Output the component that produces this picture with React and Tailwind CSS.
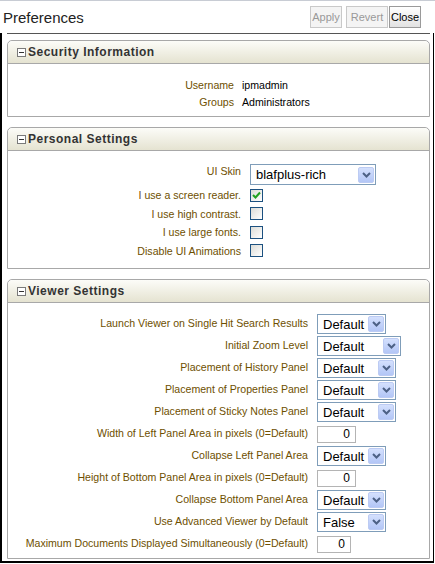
import React from "react";

const font = "font-['Liberation_Sans',Arial,sans-serif]";

function Chevron() {
  return (
    <svg width="9" height="6" viewBox="0 0 9 6">
      <path d="M1 1 L4.5 4.5 L8 1" fill="none" stroke="#4d6185" strokeWidth="2" />
    </svg>
  );
}

function Select({ value, w, h = "h-[20px]" }) {
  return (
    <div className={`flex items-center ${w} ${h} border border-[#7f9db9] bg-white`}>
      <span className="flex-1 pl-[5px] text-[13px] text-black leading-none">{value}</span>
      <span className="w-[16px] h-[16px] mr-[1px] flex items-center justify-center rounded-[2px] bg-gradient-to-b from-[#d4e0fd] to-[#b3c6f6] border border-[#bccbf3]">
        <Chevron />
      </span>
    </div>
  );
}

function TextInput({ value, w }) {
  return (
    <div className={`${w} h-[17px] border border-[#b4b4b4] bg-white flex items-center justify-end pr-[5px] text-[12px] text-black`}>
      {value}
    </div>
  );
}

function Checkbox({ checked }) {
  return (
    <div className="w-[13px] h-[13px] border border-[#1c5180] bg-gradient-to-br from-[#dcdcd7] to-white flex items-center justify-center">
      {checked && (
        <svg width="9" height="9" viewBox="0 0 9 9">
          <path d="M1 4 L3.5 6.5 L8 1.5" fill="none" stroke="#21a121" strokeWidth="2" />
        </svg>
      )}
    </div>
  );
}

function Panel({ title, className = "", children }) {
  return (
    <div className={`ml-[5px] mr-[3px] border border-[#a8a8a8] rounded-t-[5px] ${className}`}>
      <div className="h-[23px] flex items-center pl-[9px] border-b border-[#a8a8a8] rounded-t-[5px] bg-gradient-to-b from-[#fcfcf8] to-[#e5e3d1]">
        <span className="w-[9px] h-[9px] border border-[#7a7a7a] flex items-center justify-center mr-[2px] bg-white">
          <span className="w-[5px] h-px bg-[#333]" />
        </span>
        <span className="text-[12px] font-bold tracking-[0.5px] text-[#333]">{title}</span>
      </div>
      {children}
    </div>
  );
}

const label = "text-[10.6px] text-[#6e4f00] text-right whitespace-nowrap";

const viewerRows = [
  { label: "Launch Viewer on Single Hit Search Results", kind: "select", value: "Default", w: "w-[69px]" },
  { label: "Initial Zoom Level", kind: "select", value: "Default", w: "w-[84px]" },
  { label: "Placement of History Panel", kind: "select", value: "Default", w: "w-[79px]" },
  { label: "Placement of Properties Panel", kind: "select", value: "Default", w: "w-[79px]" },
  { label: "Placement of Sticky Notes Panel", kind: "select", value: "Default", w: "w-[79px]" },
  { label: "Width of Left Panel Area in pixels (0=Default)", kind: "input", value: "0", w: "w-[39px]" },
  { label: "Collapse Left Panel Area", kind: "select", value: "Default", w: "w-[69px]" },
  { label: "Height of Bottom Panel Area in pixels (0=Default)", kind: "input", value: "0", w: "w-[39px]" },
  { label: "Collapse Bottom Panel Area", kind: "select", value: "Default", w: "w-[69px]" },
  { label: "Use Advanced Viewer by Default", kind: "select", value: "False", w: "w-[69px]" },
  { label: "Maximum Documents Displayed Simultaneously (0=Default)", kind: "input", value: "0", w: "w-[34px]" },
];

const personalRows = [
  { label: "I use a screen reader.", checked: true },
  { label: "I use high contrast.", checked: false },
  { label: "I use large fonts.", checked: false },
  { label: "Disable UI Animations", checked: false },
];

export default function App() {
  return (
    <div className={`w-[435px] h-[564px] bg-white border-t border-[#c8ccd4] overflow-hidden ${font}`}>
      {/* Title bar */}
      <div className="h-[32px] flex items-center pl-[3px] pr-[14px]">
        <h1 className="text-[15px] text-[#222] leading-none">Preferences</h1>
        <div className="ml-auto flex items-center">
          <button className="w-[32px] h-[22px] border border-[#c9c9c9] bg-[#f4f4f4] text-[11px] text-[#999]">Apply</button>
          <button className="ml-[4px] w-[42px] h-[22px] border border-[#c9c9c9] bg-[#f4f4f4] text-[11px] text-[#999]">Revert</button>
          <button className="ml-[1px] w-[32px] h-[22px] border border-[#9a9a9a] bg-gradient-to-b from-white to-[#e2e2e2] text-[11px] text-black">Close</button>
        </div>
      </div>

      {/* Body */}
      <div className="w-[434px] h-[530px] border-l-2 border-r border-b-2 border-black">
        <div className="ml-[5px] mr-[3px] h-px bg-[#555]" />

        <Panel title="Security Information" className="mt-[6px]">
          <div className="pt-[13px] pb-[5px] grid grid-cols-[226px_auto] gap-x-[8px] text-[10.6px]">
            <div className={`${label} h-[17px] leading-[17px]`}>Username</div>
            <div className="h-[17px] leading-[17px] text-black">ipmadmin</div>
            <div className={`${label} h-[17px] leading-[17px]`}>Groups</div>
            <div className="h-[17px] leading-[17px] text-black">Administrators</div>
          </div>
        </Panel>

        <Panel title="Personal Settings" className="mt-[10px]">
          <div className="pt-[12px] pb-[8px] grid grid-cols-[233px_auto] gap-x-[9px]">
            <div className={`${label} h-[23px] leading-[17px]`}>UI Skin</div>
            <div className="h-[23px] pt-px">
              <Select value="blafplus-rich" w="w-[126px]" h="h-[21px]" />
            </div>
            {personalRows.map((r) => (
              <React.Fragment key={r.label}>
                <div className={`${label} h-[18.5px] leading-[18px]`}>{r.label}</div>
                <div className="h-[18.5px] flex items-center">
                  <Checkbox checked={r.checked} />
                </div>
              </React.Fragment>
            ))}
          </div>
        </Panel>

        <Panel title="Viewer Settings" className="mt-[10px]">
          <div className="pt-[10px] pb-[3px] grid grid-cols-[300px_auto] gap-x-[9px]">
            {viewerRows.map((r) => (
              <React.Fragment key={r.label}>
                <div className={`${label} h-[22px] leading-[20px]`}>{r.label}</div>
                <div className="h-[22px] flex items-center">
                  {r.kind === "select" ? (
                    <Select value={r.value} w={r.w} />
                  ) : (
                    <TextInput value={r.value} w={r.w} />
                  )}
                </div>
              </React.Fragment>
            ))}
          </div>
        </Panel>
      </div>
    </div>
  );
}
